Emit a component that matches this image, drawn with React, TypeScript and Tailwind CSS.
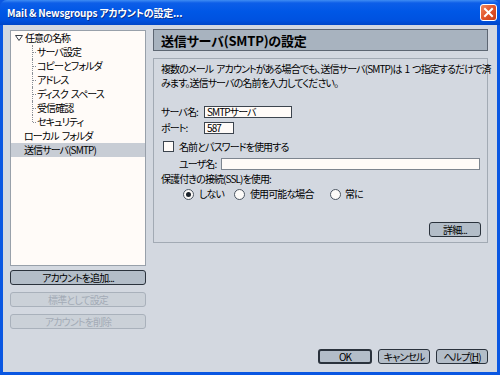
import React from "react";

const JP = { fontFamily: '"Noto Sans CJK JP", "Noto Sans", sans-serif', fontFeatureSettings: '"palt"' } as React.CSSProperties;

function Btn({ children, w, disabled, def }: { children: React.ReactNode; w: string; disabled?: boolean; def?: boolean }) {
  return (
    <div
      className={
        "flex items-center justify-center rounded-[3px] h-[15px] text-[10px] leading-none whitespace-nowrap " +
        w +
        " " +
        (disabled
          ? "border border-[#a9b1bb] bg-[#cbd1d8] text-[#a3abb6]"
          : def
          ? "border-2 border-[#2a323c] bg-[#b3bdc8] text-black"
          : "border border-[#2a323c] bg-[#b3bdc8] text-black")
      }
    >
      {children}
    </div>
  );
}

function TreeSub({ label, last }: { label: React.ReactNode; last?: boolean }) {
  return (
    <div className="relative h-[14px] flex items-center pl-[26px] whitespace-nowrap">
      <div className={"absolute left-[21px] top-0 w-0 border-l border-dotted border-[#8a8f96] " + (last ? "h-[7px]" : "h-[14px]")} />
      <div className="absolute left-[22px] top-[7px] w-[3px] border-t border-dotted border-[#8a8f96]" />
      <span>{label}</span>
    </div>
  );
}

function Radio({ checked }: { checked?: boolean }) {
  return (
    <div className="w-[11px] h-[11px] shrink-0 rounded-full border border-[#4b5561] bg-[#fdfbf9] flex items-center justify-center">
      {checked && <div className="w-[5px] h-[5px] rounded-full bg-[#1c232c]" />}
    </div>
  );
}

const Sp = () => <span className="inline-block w-[3px]" />;

export default function App() {
  return (
    <div className="w-[500px] h-[375px] bg-[#0a57e2] flex flex-col text-black overflow-hidden" style={JP}>
      {/* Title bar */}
      <div className="h-[25px] flex items-center rounded-t-[7px] bg-[linear-gradient(to_bottom,#3f8cf3_0%,#0d5ee8_12%,#0057e6_45%,#0052e0_80%,#0046c8_100%)] pl-[7px] pr-[3px]">
        <span className="text-white font-bold text-[10px] tracking-[-0.2px] whitespace-nowrap [text-shadow:1px_1px_0_#0a2f8a]">
          Mail &amp; Newsgroups アカウントの設定...
        </span>
        <div className="ml-auto w-[17px] h-[17px] rounded-[3px] border border-white bg-[linear-gradient(135deg,#f0885f_0%,#e2542a_50%,#c83f1a_100%)] flex items-center justify-center">
          <svg width="11" height="11" viewBox="0 0 11 11">
            <path d="M2 2 L9 9 M9 2 L2 9" stroke="white" strokeWidth="2" strokeLinecap="square" />
          </svg>
        </div>
      </div>

      {/* Body */}
      <div className="flex-1 mx-[3px] mb-[3px] bg-[#d3d8e0] flex flex-col pt-[5px] pl-[7px] pr-[9px] pb-[8px] text-[10px] tracking-[-0.9px] leading-none">
        <div className="flex">
          {/* Left column */}
          <div className="w-[137px] flex flex-col">
            <div className="h-[236px] border border-[#98a0aa] bg-[#fffbf8] flex flex-col">
              <div className="h-[14px] flex items-center pl-[4px] whitespace-nowrap">
                <svg width="8" height="6" viewBox="0 0 8 6" className="mr-[2px]">
                  <path d="M0.5 0.5 L7.5 0.5 L4 5.5 Z" fill="white" stroke="#3a3f46" strokeWidth="1" />
                </svg>
                <span>任意の名称</span>
              </div>
              <TreeSub label="サーバ設定" />
              <TreeSub label="コピーとフォルダ" />
              <TreeSub label="アドレス" />
              <TreeSub label={<>ディスク<Sp />スペース</>} />
              <TreeSub label="受信確認" />
              <TreeSub label="セキュリティ" last />
              <div className="h-[14px] flex items-center pl-[13px] whitespace-nowrap">ローカル<Sp />フォルダ</div>
              <div className="h-[14px] flex items-center pl-[13px] bg-[#c8cdd5] whitespace-nowrap">送信サーバ(SMTP)</div>
            </div>
            <div className="mt-[4px] flex flex-col gap-[7px]">
              <Btn w="w-[136px]">アカウントを追加...</Btn>
              <Btn w="w-[136px]" disabled>標準として設定</Btn>
              <Btn w="w-[136px]" disabled>アカウントを削除</Btn>
            </div>
          </div>

          {/* Right column */}
          <div className="ml-[7px] w-[335px] flex flex-col">
            <div className="mt-[-1px] h-[22px] border border-[#5d6672] bg-[#a8b3bf] flex items-center pl-[7px]">
              <span className="font-bold text-[13px] tracking-[-0.2px] whitespace-nowrap">送信サーバ(SMTP)の設定</span>
            </div>
            <div className="mt-[7px] h-[185px] border border-[#a2aab4] flex flex-col pl-[7px] pr-[6px]">
              <div className="mt-[3px] leading-[14px] whitespace-nowrap">
                複数のメール<Sp />アカウントがある場合でも、送信サーバ(SMTP)は<Sp />1<Sp />つ指定するだけで済
                <br />
                みます。送信サーバの名前を入力してください。
              </div>
              <div className="mt-[16px] h-[12px] flex items-center whitespace-nowrap">
                <span className="w-[43px] shrink-0">サーバ名:</span>
                <div className="w-[88px] h-[12px] border border-[#3c444e] bg-[#fffbf8] flex items-center pl-[2px]">SMTPサーバ</div>
              </div>
              <div className="mt-[4px] h-[12px] flex items-center whitespace-nowrap">
                <span className="w-[43px] shrink-0">ポート:</span>
                <div className="w-[30px] h-[12px] border border-[#3c444e] bg-[#fffbf8] flex items-center pl-[2px]">587</div>
              </div>
              <div className="mt-[6px] h-[13px] flex items-center pl-[2px] whitespace-nowrap">
                <div className="w-[11px] h-[11px] border border-[#3c444e] bg-[#fffbf8]" />
                <span className="ml-[5px]">名前とパスワードを使用する</span>
              </div>
              <div className="mt-[5px] h-[12px] flex items-center pl-[18px] whitespace-nowrap">
                <span className="w-[42px] shrink-0">ユーザ名:</span>
                <div className="w-[259px] h-[12px] border border-[#7d858f] bg-[#fffbf8]" />
              </div>
              <div className="mt-[3px] h-[12px] flex items-center whitespace-nowrap">保護付きの接続(SSL)を使用:</div>
              <div className="mt-[3px] h-[12px] flex items-center pl-[22px] whitespace-nowrap">
                <Radio checked />
                <span className="ml-[5px] w-[35px] shrink-0">しない</span>
                <Radio />
                <span className="ml-[5px] w-[80px] shrink-0">使用可能な場合</span>
                <Radio />
                <span className="ml-[4px]">常に</span>
              </div>
              <div className="mt-[22px] flex justify-end">
                <Btn w="w-[52px]">詳細...</Btn>
              </div>
            </div>
          </div>
        </div>

        {/* Bottom buttons */}
        <div className="mt-auto flex justify-end gap-[6px]">
          <Btn w="w-[54px]" def>OK</Btn>
          <Btn w="w-[52px]">キャンセル</Btn>
          <Btn w="w-[52px]">
            ヘルプ(<span className="underline">H</span>)
          </Btn>
        </div>
      </div>
    </div>
  );
}
